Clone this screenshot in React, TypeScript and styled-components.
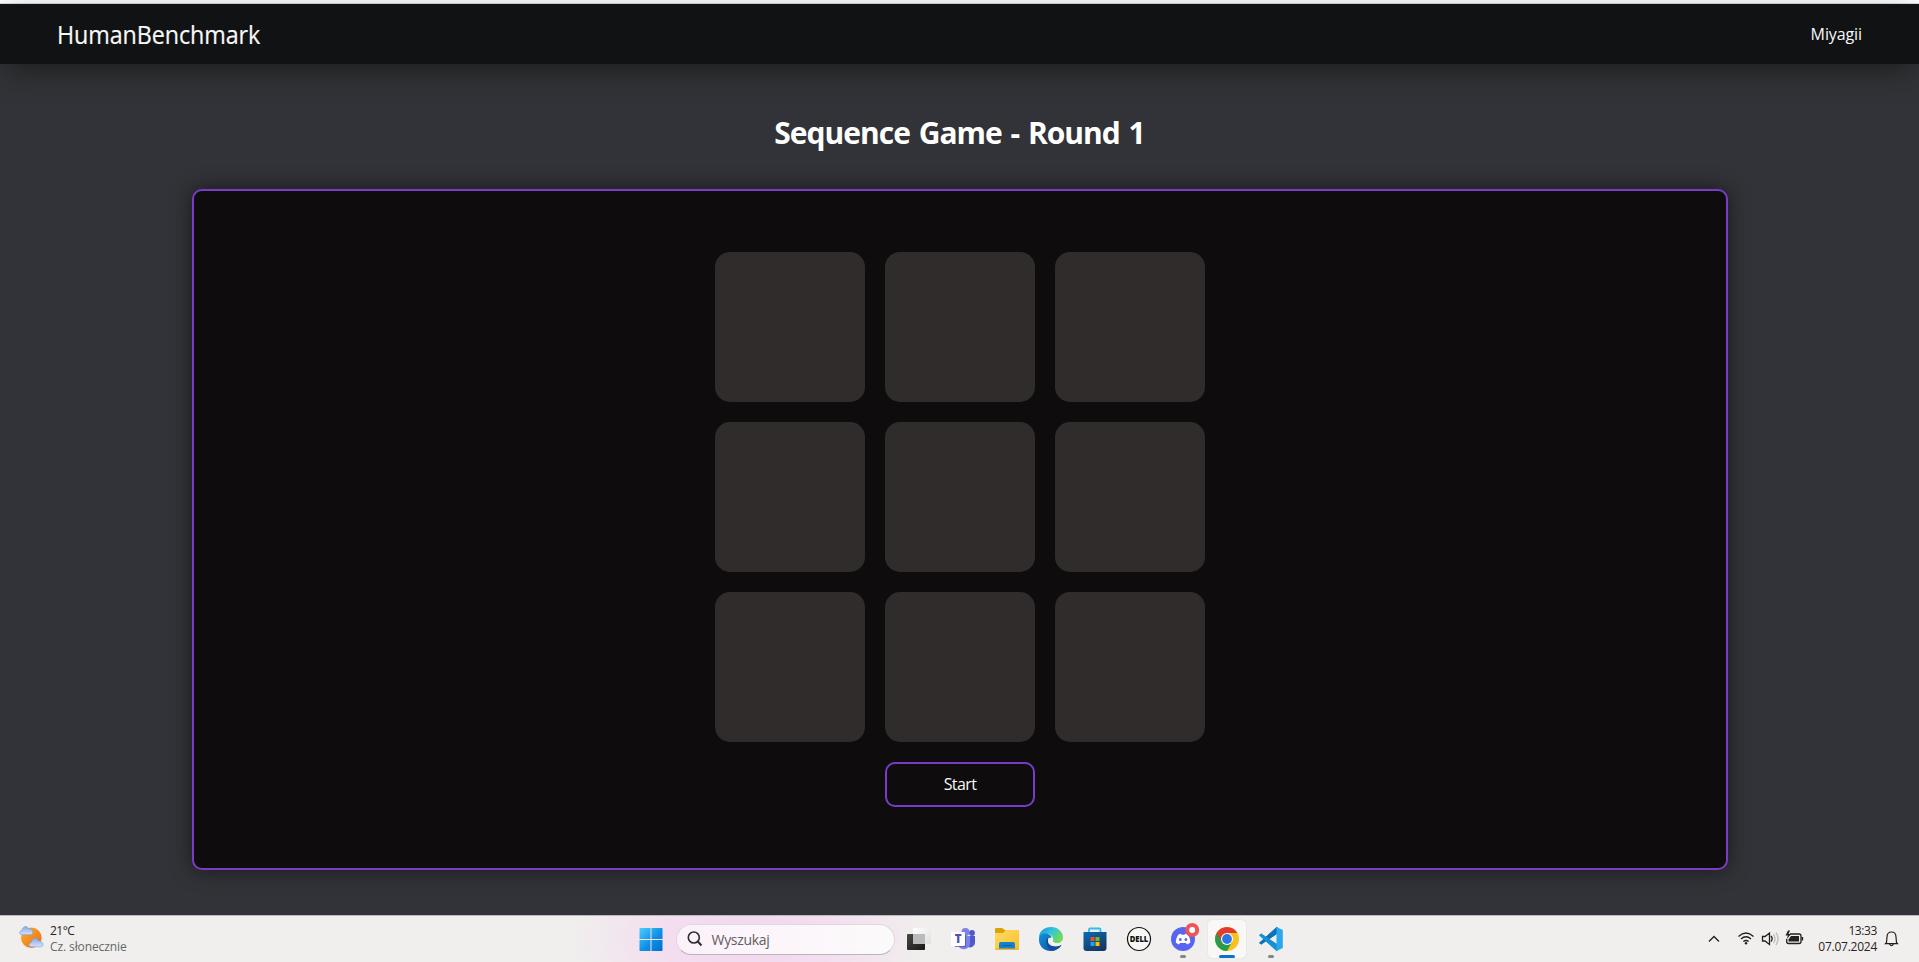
import React from "react";
import styled, { createGlobalStyle } from "styled-components";

const Global = createGlobalStyle`
  * { box-sizing: border-box; }
  html, body { margin: 0; padding: 0; }
  body {
    font-family: "Segoe UI", "Open Sans", "Noto Sans", sans-serif;
    background: #323338;
    color: #fff;
    overflow: hidden;
  }
`;

const Screen = styled.div`
  height: 962px;
  display: flex;
  flex-direction: column;
`;

const BrowserEdge = styled.div`
  flex: 0 0 4px;
  background: #fff;
  border-bottom: 1px solid #dcdcdc;
`;

const Navbar = styled.nav`
  flex: 0 0 60px;
  display: flex;
  align-items: center;
  justify-content: space-between;
  padding: 0 57px 0 57px;
  background: #111214;
  box-shadow: 0 10px 30px -6px rgba(17, 20, 16, 0.75);
`;

const Label = styled.span<{ $size: number; $track?: number; $weight?: number; $color?: string; $line?: number }>`
  font-size: ${(p) => p.$size}px;
  letter-spacing: ${(p) => p.$track ?? 0}px;
  font-weight: ${(p) => p.$weight ?? 400};
  color: ${(p) => p.$color ?? "#f8f8f8"};
  line-height: ${(p) => (p.$line ? `${p.$line}px` : "normal")};
  white-space: nowrap;
`;

const Brand = styled(Label)`
  display: inline-block;
  transform: scaleX(0.932);
  transform-origin: left center;
  -webkit-text-stroke: 0.2px #f8f8f8;
`;

const Main = styled.main`
  flex: 1;
  min-height: 0;
  display: flex;
  flex-direction: column;
  align-items: center;
`;

const Title = styled.h1`
  margin: 47px 0 0;
  height: 78px;
  font-size: 30px;
  line-height: 44px;
  font-weight: 700;
  letter-spacing: -1px;
  word-spacing: 2px;
  white-space: nowrap;
`;

const Board = styled.section`
  width: 1536px;
  margin-left: 1px;
  height: 681px;
  padding: 61px 0;
  display: flex;
  flex-direction: column;
  align-items: center;
  gap: 20px;
  background: #0e0c0d;
  border: 2px solid #7a3cc8;
  border-radius: 10px;
  box-shadow: 0 0 20px rgba(17, 18, 16, 0.75);
`;

const Tiles = styled.div`
  display: grid;
  grid-template-columns: repeat(3, 150px);
  grid-auto-rows: 150px;
  gap: 20px;
`;

const Tile = styled.div`
  background: #302c2b;
  border-radius: 15px;
`;

const StartButton = styled.button`
  width: 150px;
  height: 45px;
  padding: 0 0 1px;
  border: 2px solid #7a3cc8;
  border-radius: 10px;
  background: #0e0c0d;
  font-family: inherit;
`;

const Taskbar = styled.footer`
  flex: 0 0 47px;
  display: flex;
  border-top: 1px solid #bdbabd;
  background: radial-gradient(ellipse 180px 80px at 750px 50%, #f2d6ec 0%, #f3def0 50%, rgba(240, 239, 238, 0) 100%), #f0efed;
`;

const Weather = styled.div`
  width: 628.5px;
  padding: 8px 0 0 18px;
  display: flex;
  gap: 6px;
`;

const Stack = styled.div<{ $end?: boolean }>`
  display: flex;
  flex-direction: column;
  margin-top: -1px;
  align-items: ${(p) => (p.$end ? "flex-end" : "flex-start")};
`;

const Slot = styled.div<{ $active?: boolean }>`
  width: 38px;
  height: 38px;
  margin: 4px 3px 0;
  padding-top: 2px;
  display: flex;
  flex-direction: column;
  align-items: center;
  border-radius: 4px;
  background: ${(p) => (p.$active ? "#f9f8f7" : "transparent")};
  box-shadow: ${(p) => (p.$active ? "0 0 1px #bbb" : "none")};
`;

const Running = styled.i<{ $active?: boolean }>`
  width: ${(p) => (p.$active ? 16 : 6)}px;
  height: 3px;
  margin-top: 1px;
  border-radius: 2px;
  background: ${(p) => (p.$active ? "#0873cf" : "#858585")};
`;

const Search = styled.div`
  width: 219px;
  height: 31px;
  margin: 8px 2.5px 0 3px;
  padding: 0 10px 1px;
  display: flex;
  align-items: center;
  gap: 9px;
  border-radius: 16px;
  border: 1px solid #e2d7df;
  border-bottom-color: #bdb4bb;
  background: linear-gradient(90deg, #fbf2f9, #fcf6fb 50%, #fbfafa);
`;

const Tray = styled.div`
  margin-left: auto;
  padding: 8px 20px 0 0;
  display: flex;
`;

const TrayIcons = styled.svg`
  width: 105px;
  height: 30px;
  margin-right: 9px;
`;

const Bell = styled.svg`
  width: 15px;
  height: 30px;
  margin-left: 7px;
`;

const IconFrame = styled.svg`
  flex: none;
  width: 34px;
  height: 32px;
`;

const Icon = ({ children }: { children: React.ReactNode }) => <IconFrame viewBox="0 0 34 32">{children}</IconFrame>;

const WeatherIcon = () => (
  <svg width="26" height="26" viewBox="0 0 26 26">
    <defs>
      <linearGradient id="sun" x1="0" y1="0" x2="1" y2="1"><stop stopColor="#f7b52c" /><stop offset="1" stopColor="#ee6518" /></linearGradient>
      <linearGradient id="cloud" x1="0" y1="0" x2="0" y2="1"><stop stopColor="#85a9e8" /><stop offset="1" stopColor="#d4e4fc" /></linearGradient>
    </defs>
    <circle cx="13.3" cy="13.7" r="10.3" fill="url(#sun)" />
    <path d="M4 10.7C1 10.7.5 7 3.8 6.4 5.1 2 8.7 1.2 10.7 4.7 15 4.3 16.8 10.7 12 10.7Z" fill="url(#cloud)" stroke="#759add" strokeWidth=".6" />
    <path d="M13.5 22.8C10.5 22.8 10 19.4 13 18.7 14.5 13.5 18.5 12.8 20.3 16.8 24.7 16.4 27 22.8 22.5 22.8Z" fill="url(#cloud)" stroke="#759add" strokeWidth=".6" />
  </svg>
);

const WindowsIcon = () => (
  <Icon>
    <defs><linearGradient id="win" gradientUnits="userSpaceOnUse" x1="5" y1="6" x2="28" y2="29"><stop stopColor="#4bd0ff" /><stop offset=".55" stopColor="#1191e4" /><stop offset="1" stopColor="#006ed0" /></linearGradient></defs>
    <path fill="url(#win)" d="M6 6H16.500V17H5.500V6.500ZM17.500 6H28L28.500 6.500V17H17.500ZM5.500 18H16.500V29H6L5.500 28.500ZM17.500 18H28.500V28.500L28 29H17.500Z" />
  </Icon>
);

const TaskViewIcon = () => (
  <Icon>
    <defs>
      <linearGradient id="tv" x1="0" y1="0" x2="1" y2="1"><stop stopColor="#484846" /><stop offset="1" stopColor="#171817" /></linearGradient>
      <linearGradient id="tw" x1="0" y1="0" x2="1" y2="1"><stop stopColor="#fff" /><stop offset="1" stopColor="#dededd" /></linearGradient>
    </defs>
    <rect x="5" y="12" width="18" height="16" rx="1" fill="url(#tv)" />
    <rect x="11" y="6" width="18" height="16" rx="1" fill="url(#tw)" />
    <path d="M11 12H23V22H11Z" fill="#bababa" />
  </Icon>
);

const TeamsIcon = () => (
  <Icon>
    <circle cx="19.500" cy="10" r="4" fill="#7b83eb" />
    <circle cx="26" cy="11" r="2.900" fill="#5059c9" />
    <path d="M22 14H29V21A5 5 0 0 1 22 25Z" fill="#5059c9" />
    <path d="M13 14H24V22A6.300 6.300 0 0 1 13 25Z" fill="#7b83eb" />
    <path d="M8 13H20V25H9Z" fill="#484fa5" opacity=".7" />
    <rect x="5" y="10" width="14" height="14" rx="1" fill="#fff" />
    <text x="12.200" y="21" textAnchor="middle" fontFamily="Open Sans, sans-serif" fontSize="11.500" fontWeight="800" fill="#4f52b2">T</text>
  </Icon>
);

const FolderIcon = () => (
  <Icon>
    <defs><linearGradient id="fold" x1="0" y1="0" x2="1" y2="1"><stop stopColor="#ffdb6b" /><stop offset="1" stopColor="#fabf24" /></linearGradient></defs>
    <path d="M5 7Q5 6 6 6H12L15 8H28Q29 8 29 9V14H5Z" fill="#dba109" />
    <path d="M5 11H13L16 8H28Q29 8 29 9V27H5Z" fill="url(#fold)" />
    <path d="M9 27V22Q9 20 11 20H23Q25 20 25 22V27Z" fill="#1481cf" />
    <path d="M12 23.500H22" stroke="#0960a5" />
    <path d="M5 26.500H29V27Q29 28 28 28H6Q5 28 5 27Z" fill="#f0b728" />
  </Icon>
);

const EdgeIcon = () => (
  <Icon>
    <defs>
      <linearGradient id="edgeTop" x1="0" y1="0" x2="1" y2=".6"><stop stopColor="#188fd2" /><stop offset=".5" stopColor="#31c5dd" /><stop offset="1" stopColor="#75dc50" /></linearGradient>
      <linearGradient id="edgeLow" x1="0" y1="0" x2="1" y2="1"><stop stopColor="#1290dc" /><stop offset="1" stopColor="#0b4e9f" /></linearGradient>
    </defs>
    <path d="M5 16C5 9 10.500 5 17 5 24 5 29 10 29 15.500 29 19 26.500 21 23 21 20 21 18.500 20 18.500 19 20 17 19 13 14 12 9.500 11.500 6 13.500 5 16Z" fill="url(#edgeTop)" />
    <path d="M5 17C5 12.500 10 10.500 14 12 16 12.800 17.500 14 18 16 14.500 15 12.500 17.500 13.500 21 15 25 22 26 27.500 23 23 30.500 12.500 31 7.500 25 5.500 22.500 5 20 5 17Z" fill="url(#edgeLow)" />
    <path d="M14 15.500C10.500 19.500 12 26 18 28.800 21.500 28.500 25.500 26 27.500 23 21 26 15 24 14 20Z" fill="#124f98" />
    <path d="M17.500 15.300C14.500 16.500 14.500 23.500 22.500 24.200 26 24 28 22 28.500 20 25.500 22.200 20 21.500 18.600 19.600 20 18.200 19 16 17.500 15.300Z" fill="#f4f3f2" />
  </Icon>
);

const StoreIcon = () => (
  <Icon>
    <defs><linearGradient id="store" x1="0" y1="0" x2=".6" y2="1"><stop stopColor="#086cb9" /><stop offset="1" stopColor="#173761" /></linearGradient></defs>
    <path d="M11 10V7.500Q11 6.500 12 6.500H21.500Q22.500 6.500 22.500 7.500V10" fill="none" stroke="#31bceb" strokeWidth="1.800" />
    <path d="M5.500 10H28.500V26Q28.500 29 25.500 29H8.500Q5.500 29 5.500 26Z" fill="url(#store)" />
    <path d="M12.500 15h4v4h-4z" fill="#f04d24" /><path d="M17.500 15h4v4h-4z" fill="#7bb70d" /><path d="M12.500 20h4v4h-4z" fill="#15a6ef" /><path d="M17.500 20h4v4h-4z" fill="#ffba08" />
  </Icon>
);

const DellIcon = () => (
  <Icon>
    <circle cx="17" cy="17" r="11.500" fill="#f7f7f6" stroke="#111" strokeWidth="1.200" />
    <text x="7.700" y="19.800" textLength="18.600" lengthAdjust="spacingAndGlyphs" fontFamily="Open Sans, sans-serif" fontSize="8" fontWeight="800" fill="#111">DELL</text>
  </Icon>
);

const DiscordIcon = () => (
  <Icon>
    <circle cx="17" cy="17" r="12" fill="#5865f2" />
    <path d="M12.500 12.500 15 11.700 15.700 12.700H18.500L19.200 11.700 21.700 12.500C23.500 15 24.600 18 24.200 20.800L21 22.500 20 21H14L13 22.500 9.900 20.800C9.600 18 10.700 15 12.500 12.500Z" fill="#fff" />
    <ellipse cx="14.300" cy="17.500" rx="1.400" ry="1.600" fill="#5865f2" /><ellipse cx="19.900" cy="17.500" rx="1.400" ry="1.600" fill="#5865f2" />
    <circle cx="26.200" cy="8" r="5" fill="#fff" stroke="#ed5558" strokeWidth="4" />
  </Icon>
);

const ChromeIcon = () => (
  <Icon>
    <circle cx="17" cy="17" r="12" fill="#fbc21e" />
    <path d="M17 17 6.610 11A12 12 0 0 0 17 29L22.200 20Z" fill="#279d4a" />
    <path d="M17 17 11.800 20 6.610 11A12 12 0 0 1 27.390 11H17Z" fill="#e33b2e" />
    <circle cx="17" cy="17" r="6" fill="#fff" /><circle cx="17" cy="17" r="4.900" fill="#2b76e5" />
  </Icon>
);

const CodeIcon = () => (
  <Icon>
    <path d="M23 5 8.200 18.600 5.500 20.800 7 22.300 23 11.500Z" fill="#0a72bb" stroke="#0a72bb" strokeLinejoin="round" />
    <path d="M23 29 5.500 13.300 7 11.800 23 22.500Z" fill="#168fd5" stroke="#168fd5" strokeLinejoin="round" />
    <path d="M22.500 5 28.800 8V26L22.500 29Z" fill="#29a8ed" />
  </Icon>
);

export default function App() {
  return (
    <Screen>
      <Global />
      <BrowserEdge />
      <Navbar>
        <Brand $size={25} $track={-0.1}>HumanBenchmark</Brand>
        <Label $size={16} $track={-0.1} $weight={500}>Miyagii</Label>
      </Navbar>
      <Main>
        <Title>Sequence Game - Round 1</Title>
        <Board>
          <Tiles>{Array.from({ length: 9 }, (_, i) => <Tile key={i} />)}</Tiles>
          <StartButton><Label $size={16} $track={-0.6} $weight={500}>Start</Label></StartButton>
        </Board>
      </Main>
      <Taskbar>
        <Weather>
          <WeatherIcon />
          <Stack>
            <Label $size={12} $track={-0.5} $line={16} $color="#222">21°C</Label>
            <Label $size={12} $track={-0.1} $line={16} $color="#666">Cz. słonecznie</Label>
          </Stack>
        </Weather>
        <Slot><WindowsIcon /></Slot>
        <Search>
          <svg width="16" height="16" viewBox="0 0 16 16" fill="none" stroke="#302c30" strokeWidth="1.600"><circle cx="6.800" cy="6.500" r="5.500" /><path d="M10.800 10.500 14.500 14.500" strokeWidth="2" /></svg>
          <Label $size={14} $track={-0.3} $color="#635d62">Wyszukaj</Label>
        </Search>
        <Slot><TaskViewIcon /></Slot>
        <Slot><TeamsIcon /></Slot>
        <Slot><FolderIcon /></Slot>
        <Slot><EdgeIcon /></Slot>
        <Slot><StoreIcon /></Slot>
        <Slot><DellIcon /></Slot>
        <Slot><DiscordIcon /><Running /></Slot>
        <Slot $active><ChromeIcon /><Running $active /></Slot>
        <Slot><CodeIcon /><Running /></Slot>
        <Tray>
          <TrayIcons viewBox="0 0 105 30" fill="none" stroke="#202020" strokeWidth="1.300">
            <path d="M5 17.500 10 12.500 15 17.500" />
            <path d="M34.500 12.500Q42 5.500 49.500 12.500M37 15Q42 10.500 47 15M39.300 17.500Q42 15.500 44.700 17.500" />
            <circle cx="42" cy="19.200" r="1.200" fill="#202020" stroke="none" />
            <path d="M58.500 12.500H61L65.500 9V20.500L61 17H58.500ZM67 12Q69.300 14.700 67 17.500" />
            <path d="M69.500 10.500Q72.500 14.700 69.500 19M72 8.500Q76 14.700 72 21" stroke="#bbb" />
            <path d="M86 10H95Q97 10 97 12V17.500Q97 19.500 95 19.500H84.500Q82.700 19.500 82.700 17.500V15M98.500 13V16.500" />
            <path d="M87 12H95V17.500H84.500V15.500Z" fill="#202020" stroke="none" />
            <path d="M84 6.500 81.500 11.500H84L82.500 15.500 87 10H84.500L86 6.500Z" fill="#202020" stroke="none" />
          </TrayIcons>
          <Stack $end>
            <Label $size={12} $track={-0.4} $line={15} $color="#252525">13:33</Label>
            <Label $size={12} $track={-0.25} $line={17} $color="#252525">07.07.2024</Label>
          </Stack>
          <Bell viewBox="0 0 15 30" fill="none" stroke="#202020" strokeWidth="1.200"><path d="M2.500 18.500 3 13Q3 8 7.500 8T12 13L12.500 18.500 13.500 19.700H1.500ZM5.500 20Q7.500 23.500 9.500 20" /></Bell>
        </Tray>
      </Taskbar>
    </Screen>
  );
}
